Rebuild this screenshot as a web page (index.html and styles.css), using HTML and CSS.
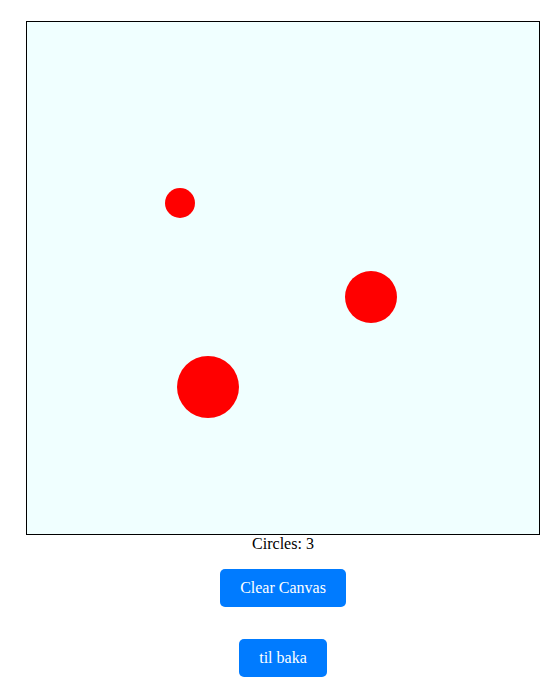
FILE: index.html
```html
<!DOCTYPE html>
<html>
<head>
<meta charset="utf-8">
<link rel="stylesheet" href="styles.css">
</head>
<body>
<div class="app">
  <svg class="board" width="512" height="512" viewBox="0 0 512 512">
    <circle cx="153" cy="181" r="15" fill="#ff0000"/>
    <circle cx="344" cy="275" r="26" fill="#ff0000"/>
    <circle cx="181" cy="365" r="31" fill="#ff0000"/>
  </svg>
  <div class="count">Circles: 3</div>
  <button class="btn btn-clear">Clear Canvas</button>
  <button class="btn btn-back">til baka</button>
</div>
</body>
</html>
```

FILE: styles.css
```css
body {
  margin: 0;
  font-family: "Liberation Serif", "Times New Roman", serif;
  font-size: 16px;
  color: #000;
  background: #fff;
}
.app {
  display: flex;
  flex-direction: column;
  align-items: center;
  width: 514px;
  margin-left: 26px;
  padding-top: 21px;
}
.board {
  display: block;
  background: #f0ffff;
  border: 1px solid #000;
}
.count {
  line-height: 18px;
  height: 18px;
}
.btn {
  font-family: "Liberation Serif", "Times New Roman", serif;
  font-size: 16px;
  line-height: 18px;
  color: #fff;
  background: #007bff;
  border: none;
  border-radius: 5px;
  padding: 10px 20px;
  cursor: pointer;
}
.btn-clear {
  margin-top: 16px;
}
.btn-back {
  margin-top: 32px;
}
```
